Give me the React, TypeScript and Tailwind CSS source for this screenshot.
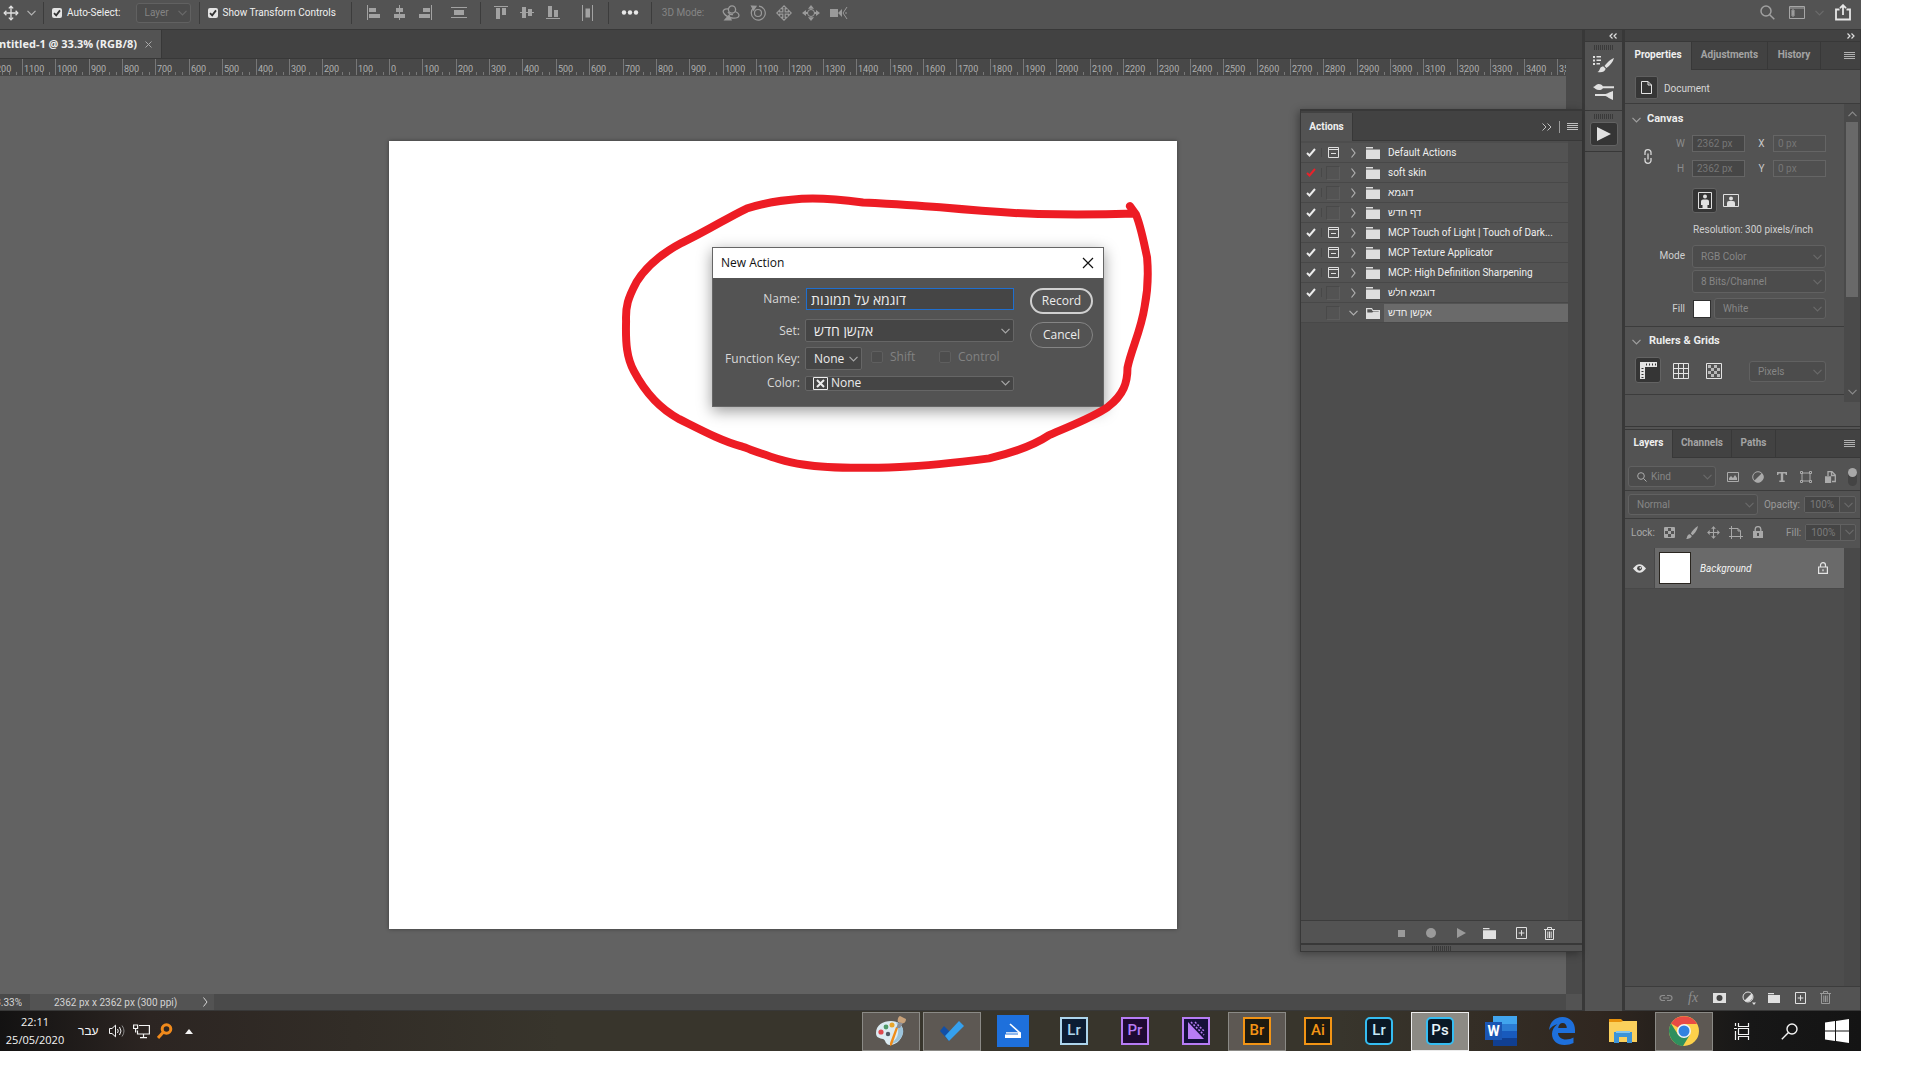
import { useState, type ReactNode } from "react";
import { clsx } from "clsx";

type IconProps = { className?: string };

function Chevron({ className = "" }: IconProps) {
  return (
    <svg viewBox="0 0 9 6" className={clsx("h-[6px] w-[9px] shrink-0", className)} fill="none" stroke="currentColor" strokeWidth="1.2">
      <path d="M0.5 0.8L4.5 4.8L8.5 0.8" />
    </svg>
  );
}

function MenuLines({ className = "" }: IconProps) {
  return (
    <svg viewBox="0 0 11 9" className={clsx("h-[9px] w-[11px]", className)} stroke="currentColor">
      <path d="M0 1.5h11M0 3.5h11M0 5.5h11M0 7.5h11" />
    </svg>
  );
}

function MoveIcon({ className = "" }: IconProps) {
  return (
    <svg viewBox="0 0 16 16" className={className} fill="none" stroke="currentColor" strokeWidth="1.3">
      <path d="M8 1v14M1 8h14" />
      <path d="M5.8 3.4L8 1.2l2.2 2.2M5.8 12.6L8 14.8l2.2-2.2M3.4 5.8L1.2 8l2.2 2.2M12.6 5.8L14.8 8l-2.2 2.2" />
    </svg>
  );
}

function Folder({ className = "h-[12px] w-[14px]" }: IconProps) {
  return (
    <svg viewBox="0 0 14 12" className={className} preserveAspectRatio="none" fill="currentColor">
      <path d="M0 0h7v1.4H0zM0 2.5h14V12H0z" />
    </svg>
  );
}

function OpenFolder() {
  return (
    <svg viewBox="0 0 14 12" className="h-[12px] w-[14px]" fill="currentColor">
      <path d="M0 1h6l1 2h7v9H0zM1.3 2.3v3.2h5l1-1h5.4V4H6.5l-1-1.7z" fillRule="evenodd" />
    </svg>
  );
}

function PlusBox({ className = "" }: IconProps) {
  return (
    <svg viewBox="0 0 11 12" className={clsx("h-[12px] w-[11px]", className)} fill="none" stroke="currentColor">
      <path d="M0.5 0.5h10v11h-10zM5.5 3.2v5.6M2.7 6h5.6" />
    </svg>
  );
}

function Trash({ className = "" }: IconProps) {
  return (
    <svg viewBox="0 0 11 13" className={clsx("h-[13px] w-[11px]", className)} fill="none" stroke="currentColor">
      <path d="M0 2.5h11M3.5 2V.5h4V2M1.5 3v9.5h8V3M3.8 4.5V11M5.5 4.5V11M7.2 4.5V11" />
    </svg>
  );
}

function Grip({ className = "" }: IconProps) {
  return (
    <svg viewBox="0 0 20 5" className={clsx("h-[5px] w-[20px]", className)} stroke="#3a3a3a">
      <path d="M.5 0v5M2.5 0v5M4.5 0v5M6.5 0v5M8.5 0v5M10.5 0v5M12.5 0v5M14.5 0v5M16.5 0v5M18.5 0v5" />
    </svg>
  );
}

function Magnifier({ className = "" }: IconProps) {
  return (
    <svg viewBox="0 0 15 15" className={className} fill="none" stroke="currentColor" strokeWidth="1.5">
      <circle cx="6" cy="6" r="5" />
      <path d="M9.7 9.7L14.3 14.3" />
    </svg>
  );
}

function Select({ label, value, className, pad = "pl-2" }: { label: string; value: string; className: string; pad?: string }) {
  return (
    <span className={clsx("relative flex items-center rounded-[3px] border border-[#616161] bg-[#4c4c4c]", className)}>
      <select aria-label={label} defaultValue={value} className={clsx("h-full w-full appearance-none bg-transparent outline-none", pad)}>
        <option>{value}</option>
      </select>
      <Chevron className="pointer-events-none absolute right-[3px] h-[5px] w-[8px] text-[#696969]" />
    </span>
  );
}

function Tick({ label }: { label: string }) {
  return (
    <label className="flex items-center gap-[5px] text-[#f0f0f0]">
      <span className="relative flex size-[10px]">
        <input type="checkbox" defaultChecked className="size-[10px] appearance-none rounded-[2px] bg-[#e4e4e4]" />
        <svg viewBox="0 0 10 10" className="pointer-events-none absolute size-[10px]" fill="none" stroke="#333" strokeWidth="1.8">
          <path d="M2 5.2l2.2 2.2L8 2.4" />
        </svg>
      </span>
      {label}
    </label>
  );
}

function Separator({ className = "" }: IconProps) {
  return <span className={clsx("h-[22px] w-px shrink-0 bg-[#3c3c3c]", className)} />;
}

const alignIcons = [
  { name: "Align left edges", d: "M0 0h1v15H0zM2 3h7v4H2zM2 9h11v4H2z" },
  { name: "Align centers", d: "M6 0h1v15H6zM3 3h7v4H3zM1 9h11v4H1z" },
  { name: "Align right edges", d: "M12 0h1v15h-1zM4 3h7v4H4zM0 9h11v4H0z" },
];

const verticalIcons = [
  { name: "Align top edges", d: "M0 1h14v1H0zM2 3h4v11H2zM8 3h4v7H8z" },
  { name: "Align middles", d: "M0 7h14v1H0zM2 2h4v11H2zM8 4h4v7H8z" },
  { name: "Align bottom edges", d: "M0 13h14v1H0zM2 1h4v11H2zM8 5h4v7H8z" },
];

function Glyph({ name, d }: { name: string; d: string }) {
  return (
    <button aria-label={name} className="text-[#a2a2a2]">
      <svg viewBox="0 0 14 15" className="h-[15px] w-[14px]" fill="currentColor">
        <path d={d} />
      </svg>
    </button>
  );
}

function OptionsBar() {
  return (
    <header className="flex h-[30px] shrink-0 items-center border-b border-[#383838] bg-[#535353] pb-1 text-[10px]">
      <MoveIcon className="ml-[3px] size-[16px] shrink-0 text-[#e0e0e0]" />
      <Chevron className="ml-[8px] text-[#b4b4b4]" />
      <Separator className="mr-[8px] ml-[7px]" />
      <Tick label="Auto-Select:" />
      <Select label="Auto-select target" value="Layer" className="ml-[15px] h-[20px] w-[55px] text-[#848484]" />
      <Separator className="mr-[8px] ml-[8px]" />
      <Tick label="Show Transform Controls" />
      <Separator className="mr-[15px] ml-[15px]" />
      <div className="flex gap-[12px]">
        {alignIcons.map((icon) => (
          <Glyph key={icon.name} {...icon} />
        ))}
      </div>
      <button aria-label="Distribute vertically" className="ml-[18px] text-[#a2a2a2]">
        <svg viewBox="0 0 16 13" className="h-[13px] w-[16px]" fill="currentColor">
          <path d="M0 1h16v1H0zM3 4h10v5H3zM0 11h16v1H0z" />
        </svg>
      </button>
      <Separator className="mr-[13px] ml-[13px]" />
      <div className="flex gap-[12px]">
        {verticalIcons.map((icon) => (
          <Glyph key={icon.name} {...icon} />
        ))}
      </div>
      <button aria-label="Distribute horizontally" className="ml-[22px] text-[#a2a2a2]">
        <svg viewBox="0 0 12 16" className="h-[16px] w-[12px]" fill="currentColor">
          <path d="M0 0h1v16H0zM3.5 3.5h4.5v9H3.5zM10 0h1v16h-1z" />
        </svg>
      </button>
      <Separator className="mr-[12px] ml-[14px]" />
      <button aria-label="More" className="text-[#e8e8e8]">
        <svg viewBox="0 0 18 5" className="h-[5px] w-[18px]" fill="currentColor">
          <circle cx="3" cy="2.5" r="2.2" />
          <circle cx="9" cy="2.5" r="2.2" />
          <circle cx="15" cy="2.5" r="2.2" />
        </svg>
      </button>
      <Separator className="mr-[10px] ml-[12px]" />
      <span className="w-[44px] whitespace-nowrap text-[#858585]">3D Mode:</span>
      <div className="ml-[16px] flex items-center gap-[10px] text-[#9a9a9a]">
        <svg viewBox="0 0 18 16" className="h-[16px] w-[18px]" fill="none" stroke="currentColor" strokeWidth="1.3">
          <circle cx="10" cy="4.5" r="3.6" />
          <path d="M6.5 4C2 3.5 0 5.5 2 8.5c2 2.8 5 4 8 4.5 4 .7 7-.5 7-2.5 0-1.500-1.500-3-4-4M6 7c1 2 3 3 5 2.5" />
          <path d="M7 10.5L3 14.8h6z" fill="currentColor" />
        </svg>
        <svg viewBox="0 0 16 16" className="size-[16px]" fill="none" stroke="currentColor" strokeWidth="1.2">
          <circle cx="8" cy="8" r="3.5" />
          <path d="M4 2.5a7 7 0 1 0 5-1.4" />
          <path d="M1.5 1l4.5.3L3.5 5z" fill="currentColor" />
        </svg>
        <svg viewBox="0 0 16 16" className="size-[16px]" fill="none" stroke="currentColor" strokeWidth="1.2">
          <path d="M8 .8L5.2 3.6h1.6v3.2H3.6V5.2L.8 8l2.8 2.800V9.2h3.2v3.2H5.2L8 15.2l2.8-2.800H9.2V9.2h3.2v1.600L15.2 8l-2.800-2.800v1.600H9.200V3.600h1.600z" />
        </svg>
        <svg viewBox="0 0 18 16" className="h-[16px] w-[18px]" fill="currentColor">
          <circle cx="9" cy="8" r="3.5" fill="none" stroke="currentColor" />
          <path d="M9 0l3 3.8H6zM9 16l3-3.8H6zM0 8l4-3v2h2v2H4v2zM18 8l-4-3v2h-2v2h2v2z" />
        </svg>
        <svg viewBox="0 0 18 14" className="h-[14px] w-[18px]" fill="currentColor">
          <path d="M0 3h8v8H0zM8 7l4-4v8z" />
          <path d="M17 1l-4 6 4 6M15 7h2" fill="none" stroke="currentColor" />
        </svg>
      </div>
      <div className="mr-[10px] ml-auto flex items-center">
        <Magnifier className="size-[15px] text-[#a0a0a0]" />
        <svg viewBox="0 0 16 13" className="ml-[14px] h-[13px] w-[16px] text-[#a6a6a6]" fill="none" stroke="currentColor">
          <path d="M.5.5h15v12H.5zM.5 2h15" />
          <path d="M3 4h2v2H3zM3 6h2v2H3zM3 8h2v2H3z" />
        </svg>
        <Chevron className="ml-[10px] text-[#6b6b6b]" />
        <svg viewBox="0 0 16 17" className="ml-[11px] h-[17px] w-[16px] text-[#e6e6e6]" fill="none" stroke="currentColor" strokeWidth="1.8">
          <path d="M4.500 5.500H1v10h14v-10h-3.500M8 11V1.500M5 4.200l3-3 3 3" />
        </svg>
      </div>
    </header>
  );
}

// one label every 100px of the document at 33.3% zoom
const ORIGIN = 389;
const STEP = 33.37;
const rulerMarks = Array.from({ length: 48 }, (_, i) => i - 12);

function Ruler() {
  return (
    <svg className="block h-[17px] w-full shrink-0 bg-[#484848]" aria-label="Ruler">
      {rulerMarks.map((mark) => {
        const x = Math.round(ORIGIN + mark * STEP);
        return (
          <g key={mark}>
            <path d={`M${x + 0.5} 0v16M${x + 7.5} 13v3M${x + 13.5} 13v3M${x + 20.5} 13v3M${x + 27.5} 13v3`} stroke="#777" />
            <text x={x + 2} y="13" fontSize="9" fill="#b0b0b0">
              {Math.abs(mark) * 100}
            </text>
          </g>
        );
      })}
    </svg>
  );
}

const actions = [
  { name: "Default Actions", dialog: true },
  { name: "soft skin", partial: true },
  { name: "דוגמא" },
  { name: "דף חדש" },
  { name: "MCP Touch of Light | Touch of Dark...", dialog: true },
  { name: "MCP Texture Applicator", dialog: true },
  { name: "MCP: High Definition Sharpening", dialog: true },
  { name: "דוגמא חלש" },
  { name: "אקשן חדש", selected: true },
];

function ActionsPanel() {
  return (
    <section className="absolute top-[50px] right-0 bottom-[59px] z-10 flex w-[282px] flex-col border border-t-2 border-r-0 border-[#383838] bg-[#4d4d4d] shadow-[-2px_2px_8px_rgba(0,0,0,0.35)]">
      <div className="flex h-[30px] shrink-0 bg-[#424242] pt-[2px]">
        <h2 className="flex w-[52px] items-center justify-center border-r border-[#383838] bg-[#535353] pb-[2px] text-[10px] font-bold text-[#f0f0f0]">
          Actions
        </h2>
        <div className="flex flex-1 items-center justify-end gap-[7px] border-b border-[#383838] pr-[4px] text-[#c0c0c0]">
          <svg viewBox="0 0 10 8" className="h-[8px] w-[10px]" fill="none" stroke="currentColor">
            <path d="M.5.5L4 4 .5 7.5M5.5.5L9 4 5.5 7.5" />
          </svg>
          <span className="h-[12px] w-px bg-[#999]" />
          <MenuLines />
        </div>
      </div>
      <div className="flex min-h-0 flex-1">
        <ul className="flex-1 pt-[2px]">
          {actions.map((action) => (
            <li key={action.name} className="flex h-[20px] items-center border-b border-[#484848] bg-[#535353]">
              <span className="flex w-[21px] shrink-0 justify-center border-r border-[#484848]">
                {!action.selected && (
                  <svg
                    viewBox="0 0 10 9"
                    className={clsx("h-[9px] w-[10px]", action.partial ? "text-[#e8222a]" : "text-[#ececec]")}
                    fill="none"
                    stroke="currentColor"
                    strokeWidth="2"
                  >
                    <path d="M1 5l2.5 2.5L9 1" />
                  </svg>
                )}
              </span>
              <span className="flex w-[22px] shrink-0 justify-center">
                {action.dialog ? (
                  <svg viewBox="0 0 11 11" className="size-[11px]" fill="none" stroke="#e0e0e0">
                    <path d="M.5.5h10v10H.5zM.5 2.5h10M3 6.5h5" />
                  </svg>
                ) : (
                  <span className="size-[14px] border border-t-[#494949] border-r-[#5d5d5d] border-b-[#5d5d5d] border-l-[#494949]" />
                )}
              </span>
              <span className="flex w-[18px] shrink-0 justify-center text-[#b0b0b0]">
                {action.selected ? (
                  <Chevron />
                ) : (
                  <svg viewBox="0 0 5 10" className="h-[10px] w-[5px]" fill="none" stroke="currentColor" strokeWidth="1.2">
                    <path d="M.5.5L4 5 .5 9.5" />
                  </svg>
                )}
              </span>
              <span className="flex w-[22px] shrink-0 justify-center text-[#dedede]">{action.selected ? <OpenFolder /> : <Folder />}</span>
              <span
                className={clsx(
                  "flex h-[18px] flex-1 items-center pl-[4px] text-[10px] whitespace-nowrap text-[#f0f0f0]",
                  action.selected && "bg-[#6a6a6a]"
                )}
              >
                {action.name}
              </span>
            </li>
          ))}
        </ul>
        <div className="w-[14px] bg-[#494949]" />
      </div>
      <div className="flex h-[23px] shrink-0 items-center justify-end border-t border-[#3c3c3c] bg-[#535353] pt-[2px] pr-[27px] text-[#e0e0e0]">
        <button aria-label="Stop" className="size-[7px] bg-[#9a9a9a]" />
        <button aria-label="Record" className="ml-[21px] size-[10px] rounded-full bg-[#9a9a9a]" />
        <button aria-label="Play" className="ml-[21px] text-[#9a9a9a]">
          <svg viewBox="0 0 9 10" className="h-[10px] w-[9px]" fill="currentColor">
            <path d="M0 0l9 5-9 5z" />
          </svg>
        </button>
        <button aria-label="New set" className="ml-[17px]">
          <Folder className="h-[11px] w-[13px]" />
        </button>
        <button aria-label="New action" className="ml-[20px]">
          <PlusBox />
        </button>
        <button aria-label="Delete" className="ml-[17px]">
          <Trash />
        </button>
      </div>
      <div className="flex h-[8px] shrink-0 items-center justify-center border-t-2 border-[#383838] bg-[#535353]">
        <Grip />
      </div>
    </section>
  );
}

function FieldLabel({ htmlFor, children }: { htmlFor: string; children: ReactNode }) {
  return (
    <label htmlFor={htmlFor} className="w-[88px] shrink-0 pr-[5px] text-right text-[#d8d8d8]">
      {children}
    </label>
  );
}

function DialogSelect({ id, value, className, swatch }: { id: string; value: string; className: string; swatch?: boolean }) {
  return (
    <span className={clsx("relative flex items-center rounded-[2px] border border-[#666] bg-[#454545] text-[#ececec]", className)}>
      {swatch && (
        <svg viewBox="0 0 15 13" className="ml-[7px] h-[13px] w-[15px] shrink-0" fill="none" stroke="#ececec">
          <path d="M.5.5h14v12H.5z" />
          <path d="M4 3l7 7M11 3l-7 7" strokeWidth="2" />
        </svg>
      )}
      <select
        id={id}
        defaultValue={value}
        className={clsx("h-full w-full appearance-none bg-transparent leading-none outline-none", swatch ? "pl-[3px]" : "pl-[8px]")}
      >
        <option>{value}</option>
      </select>
      <Chevron className="pointer-events-none absolute right-[3px] h-[5px] w-[8px] text-[#a8a8a8]" />
    </span>
  );
}

function NewActionDialog() {
  const [name, setName] = useState("דוגמא על תמונות");

  return (
    <div
      role="dialog"
      aria-label="New Action"
      className="absolute top-[247px] left-[712px] z-20 w-[392px] border border-[#666] bg-[#535353] font-['Open_Sans','Liberation_Sans',sans-serif] text-[12px] shadow-[0_4px_14px_rgba(0,0,0,0.4)]"
    >
      <div className="flex h-[30px] items-center justify-between bg-white pr-[9px] pl-[8px] text-[#111]">
        <span>New Action</span>
        <button aria-label="Close">
          <svg viewBox="0 0 12 12" className="size-[12px]" stroke="currentColor" strokeWidth="1.2">
            <path d="M1 1l10 10M11 1L1 11" />
          </svg>
        </button>
      </div>
      <form className="flex h-[128px] justify-between pt-[10px] pr-[10px] pl-[4px]">
        <div className="flex flex-col">
          <div className="flex h-[22px] items-center">
            <FieldLabel htmlFor="action-name">Name:</FieldLabel>
            <input
              id="action-name"
              value={name}
              onChange={(e) => setName(e.target.value)}
              className="ml-px h-[22px] w-[208px] border border-[#1f6fd0] bg-[#454545] pl-[4px] text-[14px] text-[#ececec] outline-none"
            />
          </div>
          <div className="mt-[9px] flex h-[23px] items-center">
            <FieldLabel htmlFor="action-set">Set:</FieldLabel>
            <DialogSelect id="action-set" value="אקשן חדש" className="h-[23px] w-[209px] text-[14px]" />
          </div>
          <div className="mt-[5px] flex h-[23px] items-center">
            <FieldLabel htmlFor="action-key">Function Key:</FieldLabel>
            <DialogSelect id="action-key" value="None" className="h-[23px] w-[57px]" />
            <label className="ml-[9px] flex w-[68px] items-center gap-[7px] pb-[3px] text-[#828282]">
              <input type="checkbox" disabled className="size-[12px] appearance-none rounded-[2px] border border-[#5f5f5f] bg-[#4d4d4d]" />
              Shift
            </label>
            <label className="flex items-center gap-[7px] pb-[3px] text-[#828282]">
              <input type="checkbox" disabled className="size-[12px] appearance-none rounded-[2px] border border-[#5f5f5f] bg-[#4d4d4d]" />
              Control
            </label>
          </div>
          <div className="mt-[4px] flex h-[18px] items-center">
            <FieldLabel htmlFor="action-color">Color:</FieldLabel>
            <DialogSelect id="action-color" value="None" className="h-[15px] w-[209px]" swatch />
          </div>
        </div>
        <div className="flex flex-col gap-[8px]">
          <button type="button" className="h-[26px] w-[63px] rounded-full border-2 border-[#d0d0d0] text-[#ececec]">
            Record
          </button>
          <button type="button" className="h-[26px] w-[63px] rounded-full border border-[#858585] text-[#ececec]">
            Cancel
          </button>
        </div>
      </form>
    </div>
  );
}

function Workspace() {
  return (
    <main className="flex min-w-0 flex-1 flex-col">
      <div className="flex h-[29px] shrink-0 border-b border-[#383838] bg-[#424242]">
        <div className="flex w-[162px] items-center border-r border-[#383838] bg-[#535353] font-['Open_Sans',sans-serif] text-[11px] font-bold whitespace-nowrap text-[#f0f0f0]">
          <span className="flex w-[137px] justify-end overflow-hidden">Untitled-1 @ 33.3% (RGB/8)</span>
          <button aria-label="Close document" className="ml-[8px] text-[#a8a8a8]">
            <svg viewBox="0 0 7 7" className="size-[7px]" stroke="currentColor">
              <path d="M.5.5l6 6M6.5.5l-6 6" />
            </svg>
          </button>
        </div>
      </div>
      <div className="relative flex min-h-0 flex-1 flex-col">
        <div className="flex min-h-0 flex-1">
          <div className="flex min-w-0 flex-1 flex-col">
            <Ruler />
            <div className="flex min-h-0 flex-1 items-center justify-center overflow-hidden bg-[#626262]">
              <div className="size-[788px] shrink-0 bg-white shadow-[0_0_4px_rgba(0,0,0,0.4)]" />
            </div>
          </div>
          <div className="w-[16px] bg-[#4a4a4a]" />
        </div>
        <footer className="flex h-[17px] shrink-0 items-center border-b border-[#383838] bg-[#4a4a4a] text-[10px] text-[#d4d4d4]">
          <span className="flex w-[22px] justify-end overflow-hidden">33.33%</span>
          <div className="ml-[8px] flex h-full w-[184px] items-center justify-between bg-[#535353] pr-[6px] pl-[24px]">
            2362 px x 2362 px (300 ppi)
            <svg viewBox="0 0 5 10" className="h-[10px] w-[5px]" fill="none" stroke="currentColor">
              <path d="M.5.5L4 5 .5 9.5" />
            </svg>
          </div>
          <div className="ml-auto h-full w-[16px] bg-[#535353]" />
        </footer>
        <ActionsPanel />
      </div>
    </main>
  );
}

function IconDock() {
  return (
    <aside className="flex w-[43px] shrink-0 flex-col items-center border-r-[3px] border-l-[3px] border-[#383838] bg-[#535353] text-[#e0e0e0]">
      <div className="flex h-[12px] w-full shrink-0 items-center justify-end border-b border-[#383838] bg-[#424242] pr-[5px]">
        <svg viewBox="0 0 8 6" className="h-[6px] w-[8px]" fill="none" stroke="currentColor" strokeWidth="1.2">
          <path d="M3.5.5L1 3l2.5 2.5M7.5.5L5 3l2.5 2.500" />
        </svg>
      </div>
      <div className="flex h-[69px] w-full shrink-0 flex-col items-center border-b border-[#383838] pt-[3px]">
        <Grip />
        <svg viewBox="0 0 22 18" className="mt-[5px] h-[18px] w-[22px]" fill="currentColor">
          <path d="M0 1h2v2H0zM3.5 1H8v1.500H3.5zM0 4.500h2v2H0zM3.5 4.500H8V6H3.5zM0 8h2v2H0zM3.5 8H7v1.500H3.5z" />
          <path d="M21 3c-3 1-7 4.500-9.500 8l2 2C17 10.500 20 7 21 3zM10.500 11.500l2.200 2.300C12 17 8 18 4.500 17c2-.7 1.800-2.300 2.800-4 .7-1.200 2-1.700 3.200-1.500z" />
        </svg>
        <svg viewBox="0 0 21 17" className="mt-[10px] h-[17px] w-[21px]" fill="currentColor">
          <path d="M0 4c2-.3 3-3 5.500-3C8 1 9.500 2.200 9.800 3.200H21v2H9.800C9.500 6.300 8 7 6 7 3 7 2 5 0 4zM2 11h10.500c2-.3 5-2.500 7.500-3v9c-3-.8-5.500-3.500-7.500-4H2z" />
        </svg>
      </div>
      <div className="flex h-[41px] w-full shrink-0 flex-col items-center border-b border-[#383838] pt-[3px]">
        <Grip />
        <button aria-label="Actions" className="mt-[3px] flex h-[24px] w-[28px] items-center justify-center rounded-[3px] border border-[#636363] bg-[#353535]">
          <svg viewBox="0 0 14 14" className="size-[14px]" fill="currentColor">
            <path d="M0 0l14 7-14 7z" />
          </svg>
        </button>
      </div>
    </aside>
  );
}

function PanelTabs({ tabs }: { tabs: { name: string; width: string }[] }) {
  return (
    <div role="tablist" className="flex h-[28px] shrink-0 bg-[#424242] text-[10px] font-bold">
      {tabs.map((tab, i) => (
        <button
          key={tab.name}
          role="tab"
          aria-selected={i === 0}
          className={clsx(
            "border-r border-[#383838]",
            tab.width,
            i === 0 ? "bg-[#535353] pb-[3px] text-[#f0f0f0]" : "border-b pb-[2px] text-[#a4a4a4]"
          )}
        >
          {tab.name}
        </button>
      ))}
      <div className="flex flex-1 items-center justify-end border-b border-[#383838] pr-[5px] text-[#b0b0b0]">
        <MenuLines />
      </div>
    </div>
  );
}

function Dimension({ label, value, filled }: { label: string; value: string; filled?: boolean }) {
  return (
    <label className={clsx("flex items-center gap-[7px]", filled ? "text-[#8c8c8c]" : "text-[#c8c8c8]")}>
      <span className="w-[9px] text-center">{label}</span>
      <input
        defaultValue={value}
        disabled
        className={clsx("h-[17px] w-[53px] border border-[#656565] pl-[4px] text-[#767676]", filled ? "bg-[#464646]" : "bg-[#505050]")}
      />
    </label>
  );
}

function PropertiesPanel() {
  return (
    <section className="flex h-[385px] shrink-0 flex-col border-b border-[#383838]">
      <PanelTabs
        tabs={[
          { name: "Properties", width: "w-[67px]" },
          { name: "Adjustments", width: "w-[76px]" },
          { name: "History", width: "w-[53px]" },
        ]}
      />
      <div className="flex h-[34px] shrink-0 items-center gap-[6px] border-b border-[#3c3c3c] pt-px pl-[10px] text-[#d8d8d8]">
        <span className="flex size-[23px] items-center justify-center rounded-[2px] border border-[#606060] bg-[#363636]">
          <svg viewBox="0 0 11 13" className="h-[13px] w-[11px]" fill="none" stroke="#e4e4e4">
            <path d="M.5.5h6.5l3.5 3.5v8.500H.5zM7 .5V4h3.5" />
          </svg>
        </span>
        <span className="pt-[2px]">Document</span>
      </div>
      <div className="flex h-[298px] shrink-0">
        <div className="flex min-w-0 flex-1 flex-col text-[#d0d0d0]">
          <h3 className="flex h-[31px] items-center gap-[6px] pl-[7px] text-[11px] font-bold text-[#ececec]">
            <Chevron className="text-[#a0a0a0]" />
            Canvas
          </h3>
          <div className="flex items-center">
            <svg viewBox="0 0 8 15" className="ml-[19px] h-[15px] w-[8px]" fill="none" stroke="#d8d8d8" strokeWidth="1.3">
              <path d="M1 6V3.5a3 2.800 0 0 1 6 0V6M1 9v2.5a3 2.800 0 0 0 6 0V9M4 4.5v6" />
            </svg>
            <div className="ml-[24px] grid grid-cols-[69px_69px] gap-x-[12px] gap-y-[8px]">
              <Dimension label="W" value="2362 px" filled />
              <Dimension label="X" value="0 px" />
              <Dimension label="H" value="2362 px" filled />
              <Dimension label="Y" value="0 px" />
            </div>
          </div>
          <div className="mt-[11px] ml-[67px] flex items-center gap-[6px]">
            <button aria-label="Portrait" className="flex size-[25px] items-center justify-center rounded-[3px] border border-[#636363] bg-[#353535]">
              <svg viewBox="0 0 14 17" className="h-[17px] w-[14px]" fill="#e0e0e0">
                <path d="M.5.5h13v16H.5z" fill="none" stroke="#e0e0e0" />
                <circle cx="7" cy="4.5" r="2" />
                <path d="M3 9.500Q3 7.500 5 7.500h4q2 0 2 2V13H9.500v3h-5v-3H3z" />
              </svg>
            </button>
            <button aria-label="Landscape">
              <svg viewBox="0 0 16 13" className="h-[13px] w-[16px]" fill="#e0e0e0">
                <path d="M.5.5h15v12H.5z" fill="none" stroke="#e0e0e0" />
                <circle cx="8" cy="4.5" r="2" />
                <path d="M4 12V9q0-2 2-2h4q2 0 2 2v3z" />
              </svg>
            </button>
          </div>
          <p className="mt-[9px] ml-[68px] h-[15px] leading-[15px]">Resolution: 300 pixels/inch</p>
          <div className="mt-[8px] flex gap-[7px]">
            <span className="w-[60px] pt-[3px] text-right">Mode</span>
            <div className="flex flex-col gap-[2px]">
              <Select label="Color mode" value="RGB Color" className="h-[23px] w-[134px] text-[#868686]" />
              <Select label="Bit depth" value="8 Bits/Channel" className="h-[23px] w-[134px] text-[#868686]" />
            </div>
          </div>
          <div className="mt-[5px] flex items-center">
            <span className="w-[60px] text-right">Fill</span>
            <span className="ml-[8px] size-[18px] border border-[#303030] bg-white" />
            <Select label="Fill color" value="White" className="ml-[3px] h-[21px] w-[112px] text-[#868686]" />
          </div>
          <h3 className="mt-[7px] flex h-[30px] items-center gap-[8px] border-t border-[#3c3c3c] pl-[7px] text-[11px] font-bold text-[#ececec]">
            <Chevron className="text-[#a0a0a0]" />
            Rulers &amp; Grids
          </h3>
          <div className="mt-px flex h-[38px] items-start border-b border-[#3c3c3c] pl-[10px]">
            <button aria-label="Rulers" className="flex size-[26px] items-center justify-center rounded-[3px] border border-[#636363] bg-[#353535]">
              <svg viewBox="0 0 17 17" className="size-[17px]">
                <path d="M0 0h17v5H5v12H0z" fill="#e4e4e4" />
                <path d="M6 2.5h10M2.5 6v10" stroke="#353535" strokeWidth="2" strokeDasharray="1 2" />
              </svg>
            </button>
            <button aria-label="Grid" className="mt-[6px] ml-[12px]">
              <svg viewBox="0 0 16 16" className="size-[16px]" fill="none" stroke="#e4e4e4">
                <path d="M.5.5h15v15H.5zM5.5 0v16M10.5 0v16M0 5.5h16M0 10.5h16" />
              </svg>
            </button>
            <button aria-label="Transparency" className="mt-[6px] ml-[17px]">
              <svg viewBox="0 0 16 16" className="size-[16px]">
                <path d="M.5.5h15v15H.5z" fill="none" stroke="#e4e4e4" />
                <path d="M2 3.500h12M2 9.500h12" stroke="#b8b8b8" strokeWidth="3" strokeDasharray="3 3" />
                <path d="M5 6.500h9M5 12.500h9" stroke="#b8b8b8" strokeWidth="3" strokeDasharray="3 3" />
              </svg>
            </button>
            <Select label="Ruler units" value="Pixels" className="mt-[4px] ml-[27px] h-[21px] w-[77px] text-[#868686]" />
          </div>
        </div>
        <div className="flex w-[16px] flex-col items-center bg-[#4a4a4a] pt-[7px] pb-[7px] text-[#8a8a8a]">
          <Chevron className="rotate-180" />
          <div className="mt-[5px] h-[175px] w-[12px] bg-[#696969]" />
          <Chevron className="mt-auto" />
        </div>
      </div>
    </section>
  );
}

function Percent({ label, className }: { label: string; className: string }) {
  return (
    <label className={clsx("ml-auto flex items-center justify-end text-[#9a9a9a]", className)}>
      {label}
      <span className="ml-[4px] flex h-[17px] w-[52px] items-center rounded-[2px] border border-[#616161] bg-[#4b4b4b]">
        <input defaultValue="100%" disabled className="h-full w-[35px] border-r border-[#616161] bg-[#454545] text-center text-[#7a7a7a]" />
        <Chevron className="ml-[4px] h-[5px] w-[8px] text-[#696969]" />
      </span>
    </label>
  );
}

function LayersPanel() {
  return (
    <section className="mt-[2px] flex min-h-0 flex-1 flex-col border-t border-b border-[#383838]">
      <PanelTabs
        tabs={[
          { name: "Layers", width: "w-[48px]" },
          { name: "Channels", width: "w-[59px]" },
          { name: "Paths", width: "w-[44px]" },
        ]}
      />
      <div className="flex h-[33px] shrink-0 items-center border-b border-[#3c3c3c] pt-[5px] pl-[3px] text-[#ababab]">
        <span className="relative flex items-center">
          <Select label="Filter kind" value="Kind" className="h-[21px] w-[88px] text-[#868686]" pad="pl-[22px]" />
          <Magnifier className="pointer-events-none absolute left-[9px] size-[10px]" />
        </span>
        <svg viewBox="0 0 12 10" className="ml-[11px] h-[10px] w-[12px]" fill="currentColor">
          <path d="M.5.5h11v9H.5z" fill="none" stroke="currentColor" />
          <path d="M2 8V6l2-2 2 2 2-3 2 3v2z" />
        </svg>
        <svg viewBox="0 0 12 12" className="ml-[13px] size-[12px]" fill="currentColor">
          <circle cx="6" cy="6" r="5.3" fill="none" stroke="currentColor" />
          <path d="M9.8 2.2A5.3 5.3 0 0 1 2.2 9.800z" />
        </svg>
        <svg viewBox="0 0 10 10" className="ml-[13px] size-[10px]" fill="currentColor">
          <path d="M0 0h10v3H8.8L8.3 1.5H6.2v7h1.5V10H2.3V8.5h1.500v-7H1.700L1.200 3H0z" />
        </svg>
        <svg viewBox="0 0 12 12" className="ml-[13px] size-[12px]" fill="none" stroke="currentColor">
          <path d="M2 2h8v8H2zM.5.5h2v2h-2zM9.5.5h2v2h-2zM.5 9.5h2v2h-2zM9.5 9.5h2v2h-2z" />
        </svg>
        <svg viewBox="0 0 11 12" className="ml-[13px] h-[12px] w-[11px]" fill="none" stroke="currentColor" strokeWidth="1.3">
          <path d="M3 5V.7h4L10.3 4v6.500H7M6.500.7V4.500h4" />
          <path d="M.5 6h5v5.500h-5z" fill="currentColor" />
        </svg>
        <span className="ml-[12px] h-[18px] w-[9px] rounded-full bg-[#444]">
          <span className="block size-[9px] rounded-full bg-[#a8a8a8]" />
        </span>
      </div>
      <div className="flex h-[28px] shrink-0 items-center border-b border-[#3c3c3c] pr-[4px] pl-[3px]">
        <Select label="Blend mode" value="Normal" className="h-[21px] w-[130px] text-[#868686]" />
        <Percent label="Opacity:" className="w-[97px]" />
      </div>
      <div className="flex h-[29px] shrink-0 items-center pr-[4px] pb-[3px] pl-[6px] text-[#a8a8a8]">
        <span className="w-[33px]">Lock:</span>
        <svg viewBox="0 0 11 11" className="size-[11px]" fill="currentColor">
          <path d="M.5.5h10v10H.5z" fill="none" stroke="currentColor" />
          <path d="M1 1h3v3H1zM7 1h3v3H7zM4 4h3v3H4zM1 7h3v3H1zM7 7h3v3H7z" />
        </svg>
        <svg viewBox="0 0 12 13" className="ml-[11px] h-[13px] w-[12px]" fill="currentColor">
          <path d="M12 0C9 1.5 6 5 4.8 7.5l1.700 1.700C9 7.500 11.500 3.500 12 0zM4 8.300l1.800 1.800C5.500 12 3 13.300 0 12.800c1.200-.8.8-1.800 1.500-3C2 8.800 3 8 4 8.300z" />
        </svg>
        <MoveIcon className="ml-[9px] size-[13px]" />
        <svg viewBox="0 0 14 13" className="ml-[9px] h-[13px] w-[14px]" fill="none" stroke="currentColor">
          <path d="M2.5 0v13M0 2.5h9l2.500 2.500v8M0 10.5h14M9 2.5V5h3" />
        </svg>
        <svg viewBox="0 0 10 12" className="ml-[10px] h-[12px] w-[10px]" fill="currentColor">
          <path d="M0 5h10v7H0z" />
          <path d="M2.2 5V3.2a2.800 2.600 0 0 1 5.600 0V5" fill="none" stroke="currentColor" strokeWidth="1.4" />
          <path d="M4 7h2v3H4z" fill="#535353" />
        </svg>
        <Percent label="Fill:" className="w-[70px]" />
      </div>
      <div className="flex min-h-0 flex-1 bg-[#4d4d4d]">
        <ul className="flex-1">
          <li className="flex h-[41px] border-b border-[#484848] bg-[#535353]">
            <button aria-label="Toggle visibility" className="flex w-[30px] items-center justify-center border-r border-[#484848]">
              <svg viewBox="0 0 13 9" className="h-[9px] w-[13px]">
                <path d="M0 4.5Q6.5-4 13 4.5 6.5 13 0 4.5z" fill="#e4e4e4" />
                <circle cx="6.5" cy="4.3" r="2.4" fill="#444" />
                <circle cx="7.3" cy="3.8" r=".9" fill="#e4e4e4" />
              </svg>
            </button>
            <div className="flex flex-1 items-center bg-[#6a6a6a] pr-[16px] pl-[4px] text-[#f4f4f4]">
              <span className="size-[32px] border border-[#2a2620] bg-white" />
              <span className="ml-[9px] italic">Background</span>
              <svg viewBox="0 0 10 12" className="ml-auto h-[12px] w-[10px]" fill="none" stroke="#e4e4e4" strokeWidth="1.2">
                <path d="M.6 5h8.800v6.400H.6zM2.5 5V3.2a2.500 2.500 0 0 1 5 0V5M5 7.2v2" />
              </svg>
            </div>
          </li>
        </ul>
        <div className="w-[16px] bg-[#494949]" />
      </div>
      <div className="flex h-[24px] shrink-0 items-center justify-end border-t border-[#3c3c3c] pr-[29px] pb-[2px] text-[#e0e0e0]">
        <svg viewBox="0 0 14 8" className="h-[8px] w-[14px] text-[#8e8e8e]" fill="none" stroke="currentColor" strokeWidth="1.2">
          <path d="M6 1.5H3.500a2.500 2.500 0 0 0 0 5H6M8 1.500h2.500a2.500 2.500 0 0 1 0 5H8M4 4h6" />
        </svg>
        <span className="ml-[15px] w-[13px] font-['Liberation_Serif',serif] text-[14px] leading-none text-[#8e8e8e] italic">fx</span>
        <svg viewBox="0 0 13 10" className="ml-[12px] h-[10px] w-[13px]">
          <path d="M0 0h13v10H0z" fill="currentColor" />
          <circle cx="6.5" cy="5" r="3" fill="#444" />
        </svg>
        <svg viewBox="0 0 14 14" className="ml-[16px] size-[14px]" fill="currentColor">
          <circle cx="6" cy="6" r="5" fill="none" stroke="currentColor" />
          <path d="M9.5 2.5A5 5 0 0 1 2.5 9.500zM10 11.500h4l-2 2.500z" />
        </svg>
        <Folder className="ml-[12px] h-[10px] w-[12px]" />
        <PlusBox className="ml-[15px]" />
        <Trash className="ml-[14px] text-[#9a9a9a]" />
      </div>
    </section>
  );
}

function AdobeIcon({ text, className }: { text: string; className: string }) {
  return (
    <span className={clsx("flex size-[28px] items-center justify-center border-2 pb-px text-[15px] leading-none font-medium", className)}>
      {text}
    </span>
  );
}

const apps: { name: string; state?: "open" | "active"; icon: ReactNode }[] = [
  {
    name: "Paint",
    state: "open",
    icon: (
      <svg viewBox="0 0 32 32" className="size-[32px]">
        <path d="M1 18C1 10 8 6 16 6c7 0 12 4 12 10 0 7-6 14-13 14-5 0-4-5-7-6-3-.8-7-1-7-6z" fill="#dcebf2" />
        <path d="M21 7c8 4 9 10 5 16-3 4-7 6-12 6 8-3 12-11 7-22z" fill="#9cc4dc" />
        <circle cx="6" cy="17" r="2.6" fill="#e0484e" />
        <circle cx="11" cy="12" r="2.4" fill="#4f9a68" />
        <circle cx="17" cy="10" r="2.5" fill="#e9a52a" />
        <circle cx="13" cy="19" r="2.2" fill="#4f5a66" />
        <path d="M21 12l2 1-6 17-2 1v-3z" fill="#ef8c1a" />
        <path d="M21 13l3-6 4 1-3 5z" fill="#8b8f98" />
        <path d="M23 7c-1-3 1-6 2-6l6 3c0 3-2 5-4 4z" fill="#c9a27a" />
      </svg>
    ),
  },
  {
    name: "To Do",
    state: "open",
    icon: (
      <svg viewBox="0 0 26 22" className="h-[22px] w-[26px]">
        <path d="M1 11l4-5 8 8-3 7z" fill="#124fa6" />
        <path d="M10 21l-4-5L20 1l5 5z" fill="#35a0ee" />
      </svg>
    ),
  },
  {
    name: "Scanner",
    icon: (
      <svg viewBox="0 0 32 32" className="size-[32px]">
        <path d="M0 0h32v32H0z" fill="#1e70dc" />
        <path d="M13 9l10 9" stroke="#fff" strokeWidth="1.6" />
        <path d="M9 17.200h15V23H8v-3.500h13v-.9H9z" fill="#fff" />
      </svg>
    ),
  },
  { name: "Lightroom Classic", icon: <AdobeIcon text="Lr" className="border-[#add5ec] bg-[#0c1c33] text-[#add5ec]" /> },
  { name: "Premiere Pro", icon: <AdobeIcon text="Pr" className="border-[#b77cf5] bg-[#1f0a33] text-[#b77cf5]" /> },
  {
    name: "Media Encoder",
    icon: (
      <svg viewBox="0 0 28 28" className="size-[28px]">
        <path d="M1 1h26v26H1z" fill="#14103a" stroke="#b77cf5" strokeWidth="2" />
        <path d="M6 5v17h16z" fill="#b77cf5" />
        <path d="M9 5l13 13M13 5l9 9" stroke="#b77cf5" strokeWidth="1.5" strokeDasharray="2 1.5" />
      </svg>
    ),
  },
  { name: "Bridge", state: "open", icon: <AdobeIcon text="Br" className="border-[#f29415] bg-[#1d1a10] text-[#f29415]" /> },
  { name: "Illustrator", icon: <AdobeIcon text="Ai" className="border-[#f29415] bg-[#1d1a10] text-[#f29415]" /> },
  { name: "Lightroom", icon: <AdobeIcon text="Lr" className="rounded-[5px] border-[#35bdf2] bg-[#0a1826] text-[#c4e8f8]" /> },
  { name: "Photoshop", state: "active", icon: <AdobeIcon text="Ps" className="rounded-[5px] border-[#35bdf2] bg-[#0a1826] text-[#e8f4fa]" /> },
  {
    name: "Word",
    icon: (
      <svg viewBox="0 0 32 30" className="h-[30px] w-[32px]">
        <path d="M8 0h24v8H8z" fill="#41a5ee" />
        <path d="M8 8h24v7H8z" fill="#2b7cd3" />
        <path d="M8 15h24v7H8z" fill="#185abd" />
        <path d="M8 22h24v8H8z" fill="#103f91" />
        <path d="M0 6h17v18H0z" fill="#1a56b4" />
        <text x="8.5" y="20" textAnchor="middle" fontSize="14" fontWeight="700" fill="#fff">
          W
        </text>
      </svg>
    ),
  },
  {
    name: "Edge",
    icon: (
      <svg viewBox="0 0 26 28" className="h-[28px] w-[26px]" fill="#1e70dc">
        <path d="M0 13C1 5 6 0 13.5 0 21 0 26 5.500 26 13v3H9c.3 4 3.500 6.500 8 6.500 3 0 5.500-.8 7.500-2V26c-2.500 1.300-5.500 2-9 2C8 28 3 23.500 3 17c0-4 2-7.500 5.500-9.800C5 8 2 10 0 13zM9.200 11h8.600c0-3-1.500-5-4.200-5-2.500 0-4.100 2-4.400 5z" />
      </svg>
    ),
  },
  {
    name: "File Explorer",
    icon: (
      <svg viewBox="0 0 28 26" className="h-[26px] w-[28px]">
        <path d="M0 1h12l2 2v4H0z" fill="#e8920c" />
        <path d="M0 4h12l2-1h14v21H0z" fill="#fbd05c" />
        <path d="M5 25V14h18v11h-5v-6h-8v6z" fill="#3d94d8" />
        <path d="M7 14h14" stroke="#86c6ee" strokeWidth="2" />
      </svg>
    ),
  },
  {
    name: "Chrome",
    state: "open",
    icon: (
      <svg viewBox="0 0 30 30" className="size-[30px]">
        <circle cx="15" cy="15" r="15" fill="#fdd14b" />
        <path d="M15 15L2 7.500A15 15 0 0 1 28 8H15z" fill="#e94b44" />
        <path d="M2 7.500A15 15 0 0 0 14 30l7-11.500-12 0z" fill="#2f8f5e" />
        <circle cx="15" cy="15" r="7" fill="#f4f4f4" />
        <circle cx="15" cy="15" r="5.5" fill="#3182e0" />
      </svg>
    ),
  },
];

function Taskbar() {
  return (
    <nav className="flex h-[40px] shrink-0 items-center bg-linear-[90deg,#131212_0%,#2c2522_8%,#38352c_30%,#38352c_72%,#302720_86%,#171717_94%,#141414_100%] text-[#f4f4f4]">
      <div className="flex w-[70px] flex-col items-center font-['Open_Sans',sans-serif] text-[11px] leading-[18px]">
        <time>22:11</time>
        <time>25/05/2020</time>
      </div>
      <span className="ml-[8px] w-[31px] text-[12px]">עבר</span>
      <svg viewBox="0 0 16 14" className="h-[14px] w-[16px]" fill="none" stroke="currentColor">
        <path d="M.5 4.5H3l3.500-3.300v11.600L3 9.500H.5zM8.500 5q1.500 2 0 4M10.500 3q3 4 0 8" />
        <path d="M13 1.5q4 5.500 0 11" stroke="#8a8a8a" />
      </svg>
      <svg viewBox="0 0 17 15" className="ml-[8px] h-[15px] w-[17px]" fill="none" stroke="currentColor" strokeWidth="1.2">
        <path d="M6 1.500h10.400v8.500H4.500V6.500M10.500 10v3.500M7 13.700h7M.6 1h4v3.500h-4zM2.600 4.500v4" />
      </svg>
      <svg viewBox="0 0 16 16" className="ml-[7px] size-[16px]" fill="none" stroke="#f08a1c" strokeWidth="3">
        <circle cx="9.5" cy="6" r="4.3" />
        <path d="M6.5 9L1 15" />
      </svg>
      <svg viewBox="0 0 8 5" className="ml-[12px] h-[5px] w-[8px]" fill="currentColor">
        <path d="M0 5l4-5 4 5z" />
      </svg>
      <div className="ml-auto flex gap-[3px]">
        {apps.map((app) => (
          <button
            key={app.name}
            aria-label={app.name}
            className={clsx(
              "flex h-[39px] w-[58px] items-center justify-center border",
              app.state === "open" && "border-[#8b8a86] bg-[#5d5853]",
              app.state === "active" && "border-[#ececec] bg-[#8c8a84]",
              !app.state && "border-transparent"
            )}
          >
            {app.icon}
          </button>
        ))}
      </div>
      <button aria-label="Task View" className="ml-[4px] flex w-[48px] justify-center">
        <svg viewBox="0 0 17 17" className="size-[17px]" fill="none" stroke="currentColor" strokeWidth="1.2">
          <path d="M5.5 0v3.500h10V0M5.500 17v-3.500h10V17M5.500 5.500h10v6h-10zM2.500 0v3M2.500 8v9M1 5.500h3" />
        </svg>
      </button>
      <button aria-label="Search" className="flex w-[48px] justify-center">
        <svg viewBox="0 0 17 17" className="size-[17px]" fill="none" stroke="currentColor" strokeWidth="1.4">
          <circle cx="11" cy="6" r="5" />
          <path d="M7.5 9.5L.8 16.2" />
        </svg>
      </button>
      <button aria-label="Start" className="flex w-[48px] justify-center">
        <svg viewBox="0 0 24 24" className="size-[24px]" fill="#fff">
          <path d="M0 3.500l10-1.400v9.400H0zM11 2l13-2v11.500H11zM0 12.500h10v9.400L0 20.500zM11 12.500h13V24l-13-2z" />
        </svg>
      </button>
    </nav>
  );
}

function Marker() {
  return (
    <svg
      viewBox="500 150 450 240"
      className="pointer-events-none absolute top-[184px] left-[612px] z-30 h-[294px] w-[551px]"
      fill="none"
      stroke="#ed1c24"
      strokeWidth="6.5"
      strokeLinecap="round"
      strokeLinejoin="round"
    >
      <path d="M927 174C900 175 870 175 848 174.500 820 173.500 790 171 768 169 745 167 725 166 705 165 690 163 670 161 655 162 640 163 622 166 610 170 595 177 580 187 557 198 540 207 528 217 520 230 513 243 511 250 511.500 262 511 280 512 292 518 303 527 320 540 334 555 342 575 352 590 360 605 364 625 371 640 377 656 379 675 382 710 382 735 381 760 380 785 377 808 374 825 370 845 363 857 355 875 347 892 341 905 332 918 322 921 312 921 300 924 285 932 270 935 250 938 235 938 222 937 210 934 195 932 185 928 175L923 168" />
    </svg>
  );
}

export default function App() {
  return (
    <div className="flex h-screen flex-col bg-white pr-[59px] pb-[29px] font-[Roboto,'Liberation_Sans',sans-serif]">
      <div className="relative flex min-h-0 flex-1 flex-col overflow-hidden">
        <OptionsBar />
        <div className="flex min-h-0 flex-1 bg-[#535353]">
          <Workspace />
          <IconDock />
          <div className="flex w-[236px] shrink-0 flex-col border-r border-[#383838] text-[10px]">
            <div className="flex h-[12px] shrink-0 items-center justify-end border-b border-[#383838] bg-[#424242] pr-[5px] text-[#e0e0e0]">
              <svg viewBox="0 0 8 6" className="h-[6px] w-[8px]" fill="none" stroke="currentColor" strokeWidth="1.2">
                <path d="M.5.5L3 3 .5 5.5M4.5.5L7 3 4.5 5.5" />
              </svg>
            </div>
            <PropertiesPanel />
            <LayersPanel />
          </div>
        </div>
        <NewActionDialog />
        <Marker />
      </div>
      <Taskbar />
    </div>
  );
}
